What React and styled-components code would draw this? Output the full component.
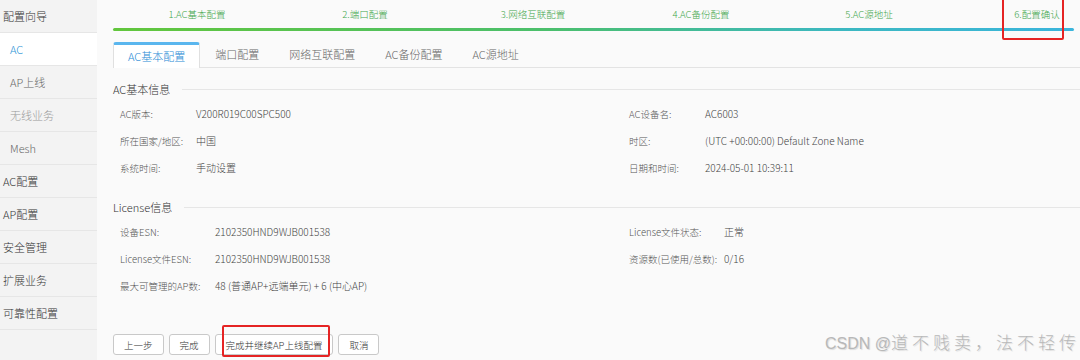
import styled, { createGlobalStyle } from 'styled-components';

const GlobalStyle = createGlobalStyle`
  html, body {
    margin: 0;
    padding: 0;
    background: #fafafa;
    font-family: "Noto Sans CJK SC", "Noto Sans", sans-serif;
  }
`;

const navItems = [
  { text: '配置向导', level: 'top' },
  { text: 'AC', level: 'sub', active: true },
  { text: 'AP上线', level: 'sub' },
  { text: '无线业务', level: 'sub', disabled: true },
  { text: 'Mesh', level: 'sub' },
  { text: 'AC配置', level: 'top' },
  { text: 'AP配置', level: 'top' },
  { text: '安全管理', level: 'top' },
  { text: '扩展业务', level: 'top' },
  { text: '可靠性配置', level: 'top' },
];

const steps = ['1.AC基本配置', '2.端口配置', '3.网络互联配置', '4.AC备份配置', '5.AC源地址', '6.配置确认'];
const tabs = ['AC基本配置', '端口配置', '网络互联配置', 'AC备份配置', 'AC源地址'];

const acInfo = [
  ['AC版本:', 'V200R019C00SPC500'],
  ['AC设备名:', 'AC6003'],
  ['所在国家/地区:', '中国'],
  ['时区:', '(UTC +00:00:00) Default Zone Name'],
  ['系统时间:', '手动设置'],
  ['日期和时间:', '2024-05-01 10:39:11'],
];

const licenseInfo = [
  ['设备ESN:', '2102350HND9WJB001538'],
  ['License文件状态:', '正常'],
  ['License文件ESN:', '2102350HND9WJB001538'],
  ['资源数(已使用/总数):', '0/16'],
  ['最大可管理的AP数:', '48 (普通AP+远端单元) + 6 (中心AP)'],
];

function App() {
  return (
    <>
      <GlobalStyle />
      <Page>
        <Sidebar>
          {navItems.map((item) => (
            <NavItem key={item.text} level={item.level} active={item.active} disabled={item.disabled}>
              {item.text}
            </NavItem>
          ))}
        </Sidebar>
        <Main>
          <StepRow>
            {steps.map((s, i) => (
              <Step key={s}>
                <StepText marked={i === steps.length - 1}>{s}</StepText>
              </Step>
            ))}
          </StepRow>
          <ProgressBar />
          <TabBar>
            {tabs.map((t, i) => (
              <Tab key={t} active={i === 0}>{t}</Tab>
            ))}
          </TabBar>

          <SectionHeader>AC基本信息</SectionHeader>
          <InfoGrid>
            {acInfo.map(([label, value]) => (
              <InfoRow key={label}>
                <Label width={76}>{label}</Label>
                <Value>{value}</Value>
              </InfoRow>
            ))}
          </InfoGrid>

          <SectionHeader spaced>License信息</SectionHeader>
          <InfoGrid>
            {licenseInfo.map(([label, value]) => (
              <InfoRow key={label}>
                <Label width={95}>{label}</Label>
                <Value>{value}</Value>
              </InfoRow>
            ))}
          </InfoGrid>

          <ButtonRow>
            <Button>上一步</Button>
            <Button>完成</Button>
            <Button marked>完成并继续AP上线配置</Button>
            <Button>取消</Button>
          </ButtonRow>
        </Main>
        <Watermark>CSDN @<span>道不贱卖，法不轻传</span></Watermark>
      </Page>
    </>
  );
}

export default App;

const Page = styled.div`
  position: relative;
  display: flex;
  width: 1080px;
  height: 360px;
  overflow: hidden;
  background: #fafafa;
  font-weight: 300;
`;

const Sidebar = styled.nav`
  width: 97px;
  flex: none;
  display: flex;
  flex-direction: column;
  background: #f3f3f3;
`;

const NavItem = styled.div`
  height: 32px;
  line-height: 32px;
  border-bottom: 1px solid #e6e6e6;
  padding-left: ${({ level }) => (level === 'sub' ? '10px' : '3px')};
  font-size: 11px;
  white-space: nowrap;
  background: ${({ active }) => (active ? '#ffffff' : 'transparent')};
  color: ${({ active, disabled, level }) =>
    active ? '#2b93d6' : disabled ? '#9a9a9a' : level === 'sub' ? '#666' : '#333'};
`;

const Main = styled.main`
  flex: 1;
  min-width: 0;
  padding-left: 16px;
  overflow: hidden;
`;

const StepRow = styled.div`
  display: flex;
  height: 28px;
  white-space: nowrap;
`;

const Step = styled.div`
  flex: none;
  width: 168px;
  display: flex;
  justify-content: center;
  align-items: center;
`;

const StepText = styled.span`
  position: relative;
  font-size: 9.5px;
  color: #3fa64a;

  ${({ marked }) =>
    marked &&
    `
    &::after {
      content: '';
      position: absolute;
      left: -12px;
      right: -4px;
      top: -12px;
      bottom: -19px;
      border: 2px solid #e52424;
      border-radius: 2px;
    }
  `}
`;

const ProgressBar = styled.div`
  height: 3px;
  margin-right: 6px;
  border-radius: 2px;
  background: linear-gradient(90deg, #62c63c 0%, #4bbf6c 45%, #3cb8c0 75%, #3ab5dc 100%);
`;

const TabBar = styled.div`
  display: flex;
  height: 25px;
  margin-top: 11px;
  border-bottom: 1px solid #e3e3e3;
`;

const Tab = styled.div`
  padding: 0 15px;
  line-height: 25px;
  font-size: 11px;
  white-space: nowrap;
  color: ${({ active }) => (active ? '#2a8bd5' : '#666')};
  background: ${({ active }) => (active ? '#ffffff' : 'transparent')};
  ${({ active }) =>
    active &&
    `
    padding: 0 14px;
    border: 1px solid #e0e0e0;
    border-top: 3px solid #5ab6ee;
    border-bottom: none;
    border-radius: 3px 3px 0 0;
    line-height: 22px;
    margin-bottom: -1px;
    height: 23px;
  `}
`;

const SectionHeader = styled.div`
  display: flex;
  align-items: center;
  gap: 12px;
  height: 20px;
  margin-top: ${({ spaced }) => (spaced ? '16px' : '11px')};
  font-size: 11px;
  color: #333;

  &::after {
    content: '';
    flex: 1;
    height: 1px;
    background: #e6e6e6;
  }
`;

const InfoGrid = styled.div`
  display: grid;
  grid-template-columns: 509px 1fr;
  margin-top: 1px;
  padding-left: 7px;
`;

const InfoRow = styled.div`
  display: flex;
  height: 27px;
  align-items: center;
  font-size: 9.5px;
  white-space: nowrap;
`;

const Label = styled.span`
  width: ${({ width }) => width}px;
  flex: none;
  color: #555;
`;

const Value = styled.span`
  color: #444;
  font-size: 10px;
`;

const ButtonRow = styled.div`
  display: flex;
  gap: 5px;
  margin-top: 35px;
`;

const Button = styled.button`
  position: relative;
  height: 21px;
  padding: 0 10px;
  border: 1px solid #c9c9c9;
  border-radius: 3px;
  background: #fff;
  font-family: inherit;
  font-weight: 300;
  font-size: 9.5px;
  color: #333;
  white-space: nowrap;

  ${({ marked }) =>
    marked &&
    `
    &::after {
      content: '';
      position: absolute;
      left: 6px;
      right: 2px;
      top: -10px;
      bottom: -3px;
      border: 2px solid #e52424;
      border-radius: 2px;
    }
  `}
`;

const Watermark = styled.div`
  position: absolute;
  right: 0;
  bottom: 6px;
  font-family: "Liberation Sans", "Noto Sans CJK SC", sans-serif;
  font-weight: 400;
  font-size: 16px;
  color: #b8b8b8;
  text-shadow: 1px 1px 1px rgba(0, 0, 0, 0.12);
  white-space: nowrap;

  span {
    font-family: "Noto Sans CJK SC", sans-serif;
    font-size: 17px;
    font-weight: 300;
    letter-spacing: 4px;
  }
`;
